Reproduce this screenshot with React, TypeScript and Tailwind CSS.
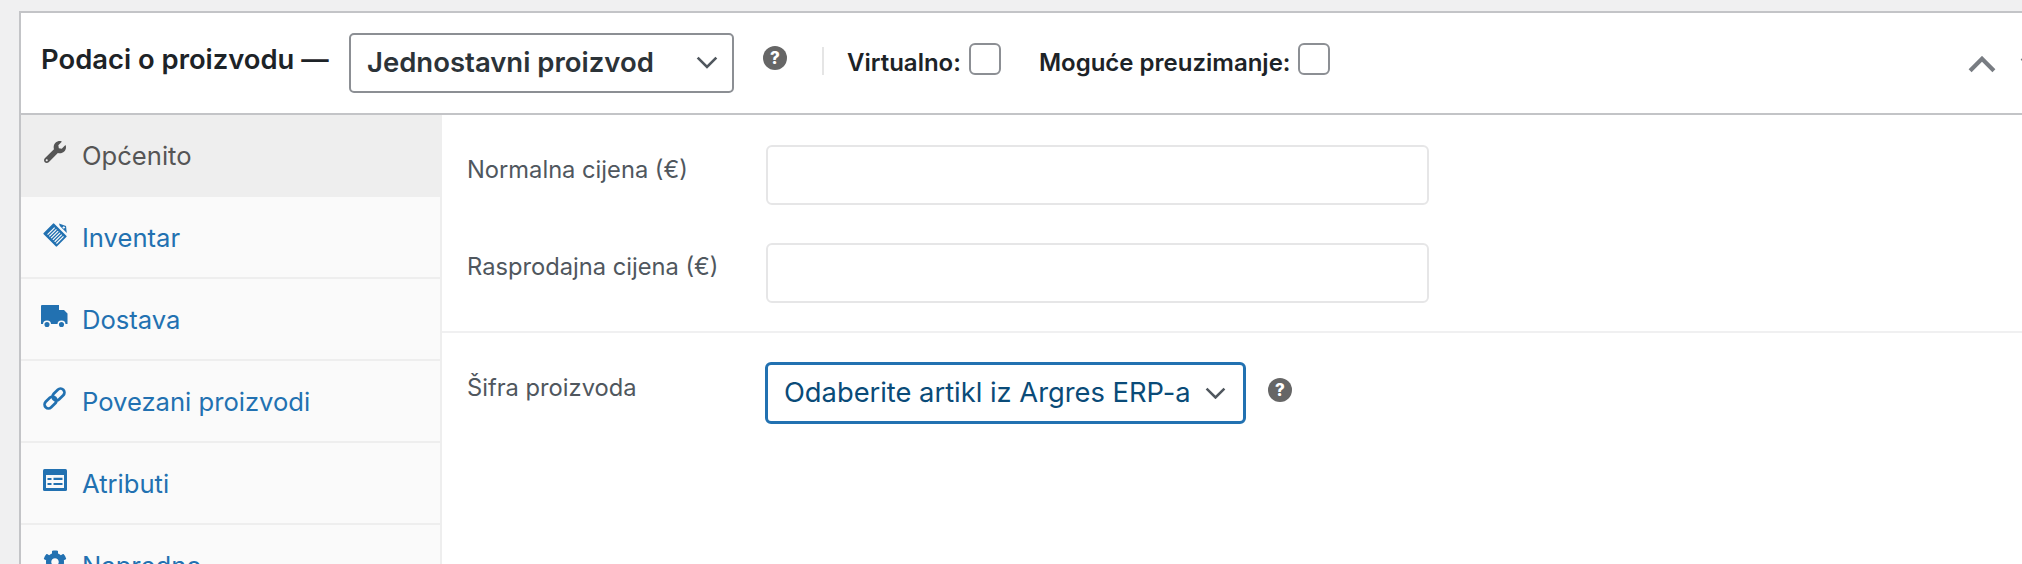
import React from "react";
import { FaWrench, FaCog } from "react-icons/fa";

const font = { fontFamily: "Inter, 'Noto Sans', sans-serif" };

function Help({ className = "" }: { className?: string }) {
  return (
    <span className={`flex h-[24px] w-[24px] shrink-0 items-center justify-center rounded-full bg-[#666666] text-[17px] leading-none font-extrabold text-white ${className}`}>?</span>
  );
}

function Chevron({ size = 22, color = "#50575e", width = 2.4, dir = "down" }: { size?: number; color?: string; width?: number; dir?: "down" | "up" }) {
  return (
    <svg width={size} height={size * 0.6} viewBox="0 0 20 12" fill="none" stroke={color} strokeWidth={width} className="shrink-0">
      <path d={dir === "down" ? "M1.5 1.5 10 10 18.5 1.5" : "M1.5 10.5 10 2 18.5 10.5"} />
    </svg>
  );
}

function InventoryIcon() {
  return (
    <svg width="26" height="26" viewBox="0 0 26 26">
      <g transform="rotate(-45 13 14)">
        <rect x="5.500" y="4.500" width="15" height="19" rx="1" fill="#2271b1" />
        <path d="M8 8.500h10M8 11h10M8 13.500h10M8 16h10M8 18.500h10M8 21h10" stroke="#fafafa" strokeWidth="1.200" />
      </g>
      <path d="M17 2.500 24 5l.8 7-3.500-3.500-3.500-3.500z" fill="#2271b1" />
      <path d="M20.500 6.500h2.600M21.800 5.200v2.600" stroke="#fafafa" strokeWidth="0.900" />
    </svg>
  );
}

function TruckIcon() {
  return (
    <svg width="27" height="23" viewBox="0 0 27 23">
      <path d="M0 1a1 1 0 0 1 1-1h17v5h5l3.500 3.500V19H0z" fill="#2271b1" />
      <circle cx="6" cy="19.500" r="3.300" fill="#2271b1" stroke="#fafafa" strokeWidth="1.500" />
      <circle cx="20.500" cy="19.500" r="3.300" fill="#2271b1" stroke="#fafafa" strokeWidth="1.500" />
    </svg>
  );
}

function LinkIcon() {
  return (
    <svg width="23" height="23" viewBox="0 0 23 23" fill="none" stroke="#2271b1" strokeWidth="2.700">
      <rect x="-6.800" y="-3.900" width="13.600" height="7.800" rx="3.900" transform="translate(7.500 15.500) rotate(-45)" />
      <rect x="-6.800" y="-3.900" width="13.600" height="7.800" rx="3.900" transform="translate(15.500 7.500) rotate(-45)" />
    </svg>
  );
}

function AttrIcon() {
  return (
    <svg width="24" height="22" viewBox="0 0 24 22">
      <rect width="24" height="22" rx="1.500" fill="#2271b1" />
      <rect x="3" y="6" width="18" height="13" fill="#fafafa" />
      <path d="M4.500 10h4M4.500 15h4M10.500 9.900h9M10.500 15h9" stroke="#2271b1" strokeWidth="2.200" />
    </svg>
  );
}

const tabs = [
  { label: "Općenito", icon: <FaWrench size={22} />, active: true },
  { label: "Inventar", icon: <InventoryIcon /> },
  { label: "Dostava", icon: <TruckIcon /> },
  { label: "Povezani proizvodi", icon: <LinkIcon /> },
  { label: "Atributi", icon: <AttrIcon /> },
  { label: "Napredno", icon: <FaCog size={24} /> },
];

export default function App() {
  return (
    <div style={font} className="h-[564px] w-[2022px] overflow-hidden bg-[#f0f0f1] pt-[11px] pl-[19px]">
      <div className="w-[2060px] border-2 border-[#c3c4c7] bg-white">
        <div className="flex h-[102px] items-start border-b-2 border-[#c3c4c7] pl-[20px]">
          <span className="mt-[28px] w-[308px] shrink-0 text-[27.400px] leading-[36px] font-semibold text-[#1d2327]">Podaci o proizvodu —</span>
          <div className="mt-[20px] flex h-[60px] w-[385px] shrink-0 items-center justify-between rounded-[5px] border-2 border-[#8c8f94] pr-[14px] pl-[16px] text-[27.500px] font-semibold text-[#2c3338]">
            <span>Jednostavni proizvod</span>
            <Chevron />
          </div>
          <Help className="mt-[33px] ml-[29px]" />
          <span className="mt-[34px] ml-[35px] h-[28px] w-[2px] shrink-0 bg-[#e5e5e5]" />
          <span className="mt-[34px] ml-[23px] text-[24px] leading-[32px] font-semibold text-[#1d2327]">Virtualno:</span>
          <input type="checkbox" className="mt-[30px] ml-[8px] h-[32px] w-[32px] shrink-0 appearance-none rounded-[6px] border-2 border-[#8c8f94] bg-white" />
          <span className="mt-[34px] ml-[38px] text-[24px] leading-[32px] font-semibold text-[#1d2327]">Moguće preuzimanje:</span>
          <input type="checkbox" className="mt-[30px] ml-[7px] h-[32px] w-[32px] shrink-0 appearance-none rounded-[6px] border-2 border-[#8c8f94] bg-white" />
          <div className="mt-[43px] mr-[29px] ml-auto flex items-start gap-[24px]">
            <Chevron size={28} color="#787c82" width={3} dir="up" />
            <Chevron size={28} color="#787c82" width={3} />
          </div>
        </div>
        <div className="flex h-[460px]">
          <div className="w-[421px] shrink-0 border-r-2 border-[#eeeeee] bg-[#fafafa]">
            {tabs.map((t) => (
              <div key={t.label} className={`flex h-[82px] items-center border-b-2 border-[#eeeeee] ${t.active ? "bg-[#eeeeee] text-[#555555]" : "text-[#2271b1]"}`}>
                <span className="mb-[6px] ml-[20px] flex w-[27px] shrink-0 justify-center">{t.icon}</span>
                <span className="mt-[2px] ml-[14px] text-[25.600px]">{t.label}</span>
              </div>
            ))}
          </div>
          <div className="min-w-0 flex-1 text-[#50575e]">
            <div className="border-b-2 border-[#f0f0f1] pt-[30px] pb-[28px] pl-[25px]">
              <div className="flex items-start">
                <label className="mt-[8px] w-[299px] shrink-0 text-[23.700px] leading-[34px]">Normalna cijena (€)</label>
                <input className="h-[60px] w-[663px] rounded-[6px] border-2 border-[#e6e6e7] bg-white" />
              </div>
              <div className="mt-[38px] flex items-start">
                <label className="mt-[7px] w-[299px] shrink-0 text-[23.700px] leading-[34px]">Rasprodajna cijena (€)</label>
                <input className="h-[60px] w-[663px] rounded-[6px] border-2 border-[#e6e6e7] bg-white" />
              </div>
            </div>
            <div className="flex items-start pt-[29px] pl-[25px]">
              <label className="mt-[9px] w-[298px] shrink-0 text-[23.700px] leading-[34px]">Šifra proizvoda</label>
              <div className="flex h-[62px] w-[481px] shrink-0 items-center justify-between rounded-[6px] border-[3px] border-[#2271b1] pr-[17px] pl-[16px] text-[27.300px] text-[#0a4b78]">
                <span className="whitespace-nowrap">Odaberite artikl iz Argres ERP-a</span>
                <Chevron size={21} />
              </div>
              <Help className="mt-[16px] ml-[22px]" />
            </div>
          </div>
        </div>
      </div>
    </div>
  );
}
